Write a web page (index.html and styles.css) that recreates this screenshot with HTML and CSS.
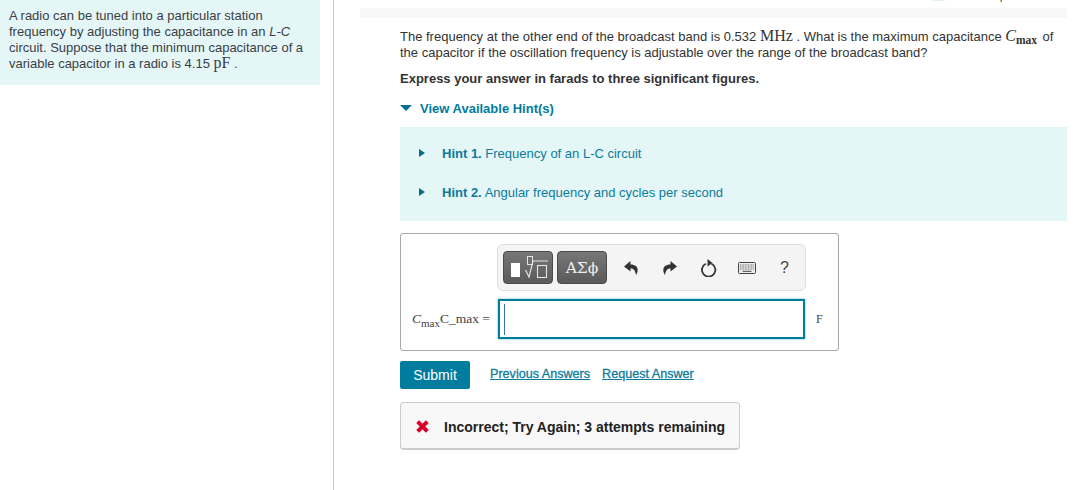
FILE: index.html
```html
<!DOCTYPE html>
<html lang="en">
<head>
<meta charset="utf-8">
<title>Problem</title>
<link rel="stylesheet" href="styles.css">
</head>
<body>
<div class="page">
  <span class="clip-a"></span>
  <span class="clip-b"></span>
  <aside class="side">
    <div class="intro">A radio can be tuned into a particular station frequency by adjusting the capacitance in an <i>L-C</i> circuit. Suppose that the minimum capacitance of a variable capacitor in a radio is 4.15 <span class="math big">pF</span> .</div>
  </aside>
  <main class="main">
    <div class="band"></div>
    <div class="content">
      <p class="q">The frequency at the other end of the broadcast band is 0.532 <span class="math big">MHz</span> . What is the maximum capacitance <span class="math big"><i>C</i><sub class="msub">max</sub></span> of the capacitor if the oscillation frequency is adjustable over the range of the broadcast band?</p>
      <p class="express">Express your answer in farads to three significant figures.</p>
      <div class="hint-toggle"><span class="tri-down"></span>View Available Hint(s)</div>
      <div class="hints">
        <div class="hint"><span class="tri-right"></span><span><b>Hint 1.</b> Frequency of an L-C circuit</span></div>
        <div class="hint"><span class="tri-right"></span><span><b>Hint 2.</b> Angular frequency and cycles per second</span></div>
      </div>
      <div class="answer">
        <div class="toolbar">
          <button class="tb tb-tpl" type="button" aria-label="templates">
            <svg width="48" height="31" viewBox="0 0 48 31">
              <rect x="7" y="11" width="9" height="14" fill="#fff"/>
              <rect x="23.500" y="4.500" width="5" height="8" fill="none" stroke="#e4e4e4"/>
              <path d="M21.500 18l3.500 7 4-16H44" fill="none" stroke="#e4e4e4" stroke-width="1.200"/>
              <rect x="33.500" y="13.500" width="9" height="12" fill="none" stroke="#e4e4e4" stroke-width="1.100"/>
            </svg>
          </button>
          <button class="tb tb-sym" type="button">ΑΣϕ</button>
          <span class="tools">
            <svg class="ico" width="15" height="14" viewBox="0 0 15 14"><path d="M6.500 0L0 5.500l6.500 5V7.500c3 0 4.700 1.500 5.500 6.500 3.500-5.500 1.500-10.500-5.500-10.500z" fill="#333"/></svg>
            <svg class="ico" width="15" height="14" viewBox="0 0 15 14"><path d="M8.500 0L15 5.500l-6.500 5V7.500c-3 0-4.700 1.500-5.500 6.500-3.500-5.500-1.500-10.500 5.500-10.500z" fill="#333"/></svg>
            <svg class="ico" width="17" height="18" viewBox="0 0 17 18"><path d="M5.800 4.800A6.700 6.700 0 1 0 11.500 4.800" fill="none" stroke="#333" stroke-width="1.800"/><path d="M7.500 0v7.500L12.500 4z" fill="#333"/></svg>
            <svg class="ico kb" width="18" height="12" viewBox="0 0 18 12"><rect x=".5" y=".5" width="17" height="11" rx="1" fill="#eee" stroke="#444"/><path d="M2 3h14M2 5h14M2 7h14" stroke="#666" stroke-dasharray="1 .6"/><path d="M4.500 9.300h9" stroke="#444"/></svg>
            <span class="help">?</span>
          </span>
        </div>
        <div class="entry">
          <span class="label"><span class="math"><i>C</i><sub class="lsub">max</sub></span>C_max =</span>
          <span class="input"><span class="caret"></span></span>
          <span class="unit">F</span>
        </div>
      </div>
      <div class="actions">
        <button class="submit" type="button">Submit</button>
        <a class="link first" href="#">Previous Answers</a>
        <a class="link" href="#">Request Answer</a>
      </div>
      <div class="feedback">
        <svg class="x" width="15" height="15" viewBox="0 0 14 14"><path d="M2.500 2.500l9 9M11.500 2.500l-9 9" stroke="#d8002a" stroke-width="3.800"/></svg>
        <span>Incorrect; Try Again; 3 attempts remaining</span>
      </div>
    </div>
  </main>
</div>
</body>
</html>
```

FILE: styles.css
```css
* { box-sizing: border-box; }
html, body { margin: 0; padding: 0; }
body {
  width: 1087px;
  height: 490px;
  overflow: hidden;
  background: #fff;
  font-family: "Liberation Sans", Arial, sans-serif;
  font-size: 13px;
  color: #333;
}
.page { display: flex; height: 490px; position: relative; }
.clip-a { position: absolute; left: 932px; top: 0; width: 13px; height: 1px; background: #e4f2f2; }
.clip-b { position: absolute; left: 1000px; top: 0; width: 2px; height: 2px; background: linear-gradient(90deg, #d9b48a 50%, #3f9bd8 50%); }
.side { width: 334px; flex: none; border-right: 1px solid #c5cbd3; }
.intro {
  width: 320px;
  height: 85px;
  padding: 8px 8px 0 9px;
  background: #e5f6f6;
  line-height: 16px;
  color: #3a4048;
}
.math { font-family: "Liberation Serif", "DejaVu Serif", serif; }
.big { font-size: 16px; line-height: 14px; }
.msub { font-size: 11.500px; font-weight: bold; vertical-align: -3px; line-height: 0; margin-right: 2px; }
.main { width: 733px; flex: none; padding: 8px 0 0 26px; }
.band { height: 10px; background: #f8f8f8; width: 707px; }
.content { padding-left: 40px; }
.q {
  margin: 11px 0 0;
  width: 660px;
  line-height: 16px;
  color: #333;
}
.express { margin: 10px 0 0; font-weight: bold; line-height: 16px; color: #333; }
.hint-toggle {
  display: flex;
  align-items: center;
  margin-top: 13px;
  height: 16px;
  color: #007c9e;
  font-weight: bold;
}
.tri-down {
  width: 0; height: 0;
  margin-right: 8px;
  border-left: 6px solid transparent;
  border-right: 6px solid transparent;
  border-top: 6px solid #00718f;
}
.hints {
  margin-top: 11px;
  height: 94px;
  padding: 18px 0 0 19px;
  background: #e5f6f6;
  width: 667px;
}
.hint { display: flex; align-items: center; height: 16px; margin-bottom: 23px; color: #0a7c9c; }
.tri-right {
  width: 0; height: 0;
  margin-right: 17px;
  border-top: 4.500px solid transparent;
  border-bottom: 4.500px solid transparent;
  border-left: 6px solid #0b6a85;
}
.answer {
  margin-top: 12px;
  width: 439px;
  height: 118px;
  border: 1px solid #a8a8a8;
  border-radius: 3px;
  padding: 10px 0 0 10px;
}
.toolbar {
  display: flex;
  align-items: center;
  width: 309px;
  height: 47px;
  margin-left: 86px;
  padding-left: 5px;
  background: #f4f4f4;
  border: 1px solid #dedede;
  border-radius: 6px;
}
.tb {
  height: 33px;
  padding: 0;
  border: 1px solid #4a4a4a;
  border-radius: 4px;
  background: linear-gradient(#777, #5a5a5a);
  color: #eee;
}
.tb-tpl { width: 50px; margin-right: 4px; display: flex; align-items: center; justify-content: center; }
.tb-sym { width: 50px; font-family: "DejaVu Serif", serif; font-size: 15.500px; }
.tools { display: flex; align-items: center; margin-left: 17px; gap: 23px; }
.kb { margin-left: -2px; }
.help { font-size: 16px; color: #444; margin-left: 1px; }
.entry { display: flex; align-items: center; margin-top: 8px; height: 40px; }
.label { width: 87px; flex: none; padding-left: 1px; font-family: "Liberation Serif", serif; font-size: 13.500px; color: #444; white-space: nowrap; }
.lsub { font-size: 11px; vertical-align: -4px; line-height: 0; }
.input {
  display: flex;
  align-items: center;
  width: 307px;
  height: 40px;
  padding-left: 4px;
  border: 2px solid #007c9e;
  box-shadow: 0 0 2px #4fb3cc;
  background: #fff;
}
.caret { width: 1px; height: 31px; background: #3b6fb6; }
.unit { margin-left: 11px; font-family: "Liberation Serif", serif; font-size: 12px; color: #444; }
.actions { display: flex; align-items: center; margin-top: 10px; }
.submit {
  width: 70px;
  height: 28px;
  padding: 0;
  border: 0;
  border-radius: 2px;
  background: #007c9e;
  color: #fff;
  font-family: "Liberation Sans", Arial, sans-serif;
  font-size: 14px;
}
.link { font-size: 12.600px; color: #0a7c9c; text-decoration: underline; margin-left: 12px; position: relative; top: -1px; -webkit-text-stroke: 0.300px #0a7c9c; }
.first { margin-left: 20px; }
.feedback {
  display: flex;
  align-items: center;
  margin-top: 13px;
  width: 340px;
  height: 48px;
  padding: 2px 0 0 14px;
  background: #f8f8f8;
  border: 1px solid #ccc;
  border-bottom-width: 2px;
  border-radius: 4px;
  font-size: 14px;
  font-weight: bold;
  color: #222;
  white-space: nowrap;
}
.x { margin-right: 14px; flex: none; }
```
